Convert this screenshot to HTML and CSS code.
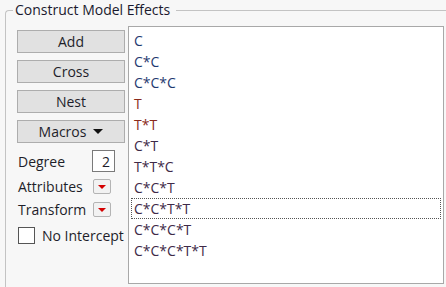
FILE: index.html
```html
<!DOCTYPE html>
<html lang="en">
<head>
   <meta charset="UTF-8">
   <title>Construct Model Effects</title>
   <link rel="stylesheet" href="styles.css">
</head>
<body>
   <div class="group">
      <div class="group-title">Construct Model Effects</div>
      <div class="group-body">
         <div class="controls">
            <button class="btn">Add</button>
            <button class="btn">Cross</button>
            <button class="btn">Nest</button>
            <button class="btn">Macros <svg class="caret" width="10" height="5" viewBox="0 0 10 5"><path d="M0 0H10L5 5Z"/></svg></button>
            <div class="opt-row degree-row">
               <span class="opt-label">Degree</span>
               <input class="degree" type="text" value="2">
            </div>
            <div class="opt-row">
               <span class="opt-label">Attributes</span>
               <span class="menu-btn"><svg width="8" height="4" viewBox="0 0 8 4"><path d="M0 0H8L4 4Z"/></svg></span>
            </div>
            <div class="opt-row">
               <span class="opt-label">Transform</span>
               <span class="menu-btn"><svg width="8" height="4" viewBox="0 0 8 4"><path d="M0 0H8L4 4Z"/></svg></span>
            </div>
            <label class="check-row"><span class="checkbox"></span>No Intercept</label>
         </div>
         <ul class="effects">
            <li class="cont">C</li>
            <li class="cont">C*C</li>
            <li class="cont">C*C*C</li>
            <li class="nom">T</li>
            <li class="nom">T*T</li>
            <li class="mix">C*T</li>
            <li class="mix">T*T*C</li>
            <li class="mix">C*C*T</li>
            <li class="mix focused">C*C*T*T</li>
            <li class="mix">C*C*C*T</li>
            <li class="mix">C*C*C*T*T</li>
         </ul>
      </div>
   </div>
</body>
</html>
```

FILE: styles.css
```css
body {
   margin: 0;
   padding: 0;
   height: 287px;
   overflow: hidden;
   background-color: #f7f7f7;
   font-family: "Open Sans", "Liberation Sans", sans-serif;
   font-size: 14px;
   color: #1e1e2a;
}

.group {
   position: relative;
   margin: 10px 0 0 5px;
   border-top: 1px solid #c3c3c3;
   border-left: 1px solid #c3c3c3;
   border-top-left-radius: 4px;
   height: 276px;
}

/* titre posé sur la ligne du cadre */
.group-title {
   position: absolute;
   left: 7px;
   top: -11px;
   padding: 0 6px 0 2px;
   line-height: 20px;
   background-color: #f7f7f7;
   color: #1a1a2e;
}

.group-body {
   display: flex;
   align-items: flex-start;
   gap: 3px;
   padding: 15px 0 0 11px;
}

.controls {
   width: 108px;
   padding-top: 4px;
   display: flex;
   flex-direction: column;
}

.btn {
   height: 23px;
   margin-bottom: 7px;
   padding: 0;
   border: 1px solid #adadad;
   background-color: #e1e1e1;
   font-family: inherit;
   font-size: 14px;
   color: #1e1e2a;
   display: flex;
   align-items: center;
   justify-content: center;
   gap: 7px;
}

.caret {
   fill: #111;
}

.opt-row {
   display: flex;
   align-items: center;
   height: 23px;
   padding-left: 1px;
}

.degree-row {
   height: 22px;
   margin-bottom: 3px;
}

.opt-label {
   width: 74px;
}

.degree {
   width: 23px;
   height: 22px;
   box-sizing: border-box;
   border: 1px solid #7a7a7a;
   background-color: #fff;
   padding: 0 4px 0 0;
   text-align: right;
   font-family: inherit;
   font-size: 14px;
   color: #1e1e2a;
}

.menu-btn {
   width: 18px;
   height: 15px;
   box-sizing: border-box;
   border: 1px solid #b4b4b4;
   border-radius: 2px;
   background-color: #f2f2f2;
   display: flex;
   align-items: center;
   justify-content: center;
   margin-left: 1px;
}

.menu-btn svg {
   fill: #d40000;
}

.check-row {
   display: flex;
   align-items: center;
   gap: 7px;
   height: 24px;
   margin-top: 2px;
   padding-left: 1px;
}

.checkbox {
   width: 17px;
   height: 17px;
   box-sizing: border-box;
   border: 1px solid #555;
   background-color: #fff;
}

.effects {
   list-style: none;
   margin: 0;
   padding: 3px 2px 0 2px;
   width: 316px;
   height: 258px;
   box-sizing: border-box;
   border: 1px solid #a8a8a8;
   background-color: #fff;
}

.effects li {
   height: 21px;
   line-height: 21px;
   padding-left: 3px;
   box-sizing: border-box;
}

.effects .cont { color: #1f3a70; }
.effects .nom { color: #8a2a1c; }
.effects .mix { color: #3e2a48; }

.effects .focused {
   outline: 1px dotted #555;
   outline-offset: -1px;
}
```
